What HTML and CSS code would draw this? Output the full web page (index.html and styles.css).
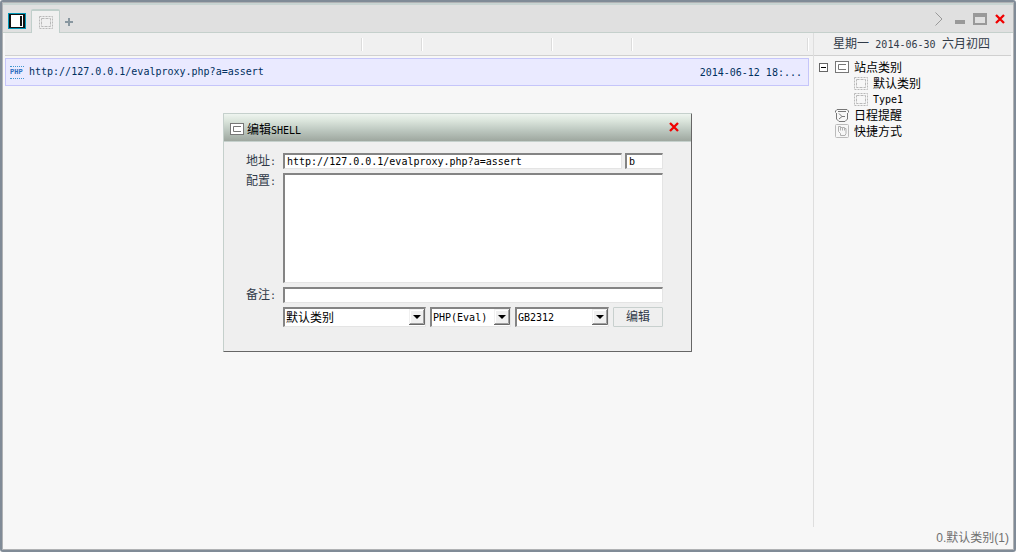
FILE: index.html
```
<!DOCTYPE html>
<html lang="zh-CN">
<head>
  <meta charset="UTF-8" />
  <meta name="viewport" content="width=device-width, initial-scale=1.0"/>
  <title>编辑SHELL</title>
  <link rel="stylesheet" href="styles.css">
</head>
<body>
  <!-- shared icons -->
  <svg class="defs" width="0" height="0" aria-hidden="true">
    <symbol id="i-box" viewBox="0 0 14 12">
      <rect x=".5" y=".5" width="13" height="11" fill="#fff" stroke="#777"/>
      <path d="M11 3.5H3.5v5H11" fill="none" stroke="#777"/>
    </symbol>
    <symbol id="i-dash" viewBox="0 0 14 13">
      <rect x=".5" y=".5" width="13" height="12" fill="none" stroke="#b9b9b9" stroke-dasharray="2 1"/>
      <rect x="2.5" y="2.5" width="9" height="8" fill="none" stroke="#b9b9b9" stroke-dasharray="3 1"/>
    </symbol>
    <symbol id="i-clock" viewBox="0 0 14 13">
      <path d="M.5 3.500V2L2 .5h10L13.500 2v1.500M3 2.500h8M1.500 4v6L4 12.500h6l2.500-2.500V4" fill="none" stroke="#777"/>
      <path d="M4 4.500l3 3-3 2.500M7 7.500h3" fill="none" stroke="#777"/>
    </symbol>
    <symbol id="i-hand" viewBox="0 0 14 14">
      <rect x=".5" y=".5" width="13" height="13" rx="1" fill="#f7f7f7" stroke="#bbb"/>
      <path d="M5.500 11.500v-2l-2-2v-5h2v4M5.500 3.500h2v3M7.500 3.500h2v3M9.500 4.500h1.500v5l-1 2H5.500" fill="none" stroke="#b0b0b0"/>
    </symbol>
    <symbol id="i-close" viewBox="0 0 10 10">
      <path d="M1 1l8 8M9 1L1 9" fill="none" stroke="#f00000" stroke-width="2.300"/>
    </symbol>
    <symbol id="i-drop" viewBox="0 0 16 16">
      <path d="M0 0h16v16H0z" fill="#f0f0f0"/>
      <path d="M1.500 15V1.500H15" fill="none" stroke="#fff"/>
      <path d="M15.500 0v15.500H0" fill="none" stroke="#696969"/>
      <path d="M14.500 1v13.500H1" fill="none" stroke="#a0a0a0"/>
      <path d="M4 6h8L8 10z" fill="#000"/>
    </symbol>
  </svg>

  <div class="window">
    <header class="titlebar">
      <svg class="app-icon" width="18" height="16" viewBox="0 0 18 16">
        <path d="M0 0h18v16H0z" fill="#0097b8"/>
        <path d="M1 1h16v14H1z" fill="#111"/>
        <path d="M3 2h12v12H3z" fill="#fff"/>
        <path d="M12 3h2v10h-2z" fill="#111"/>
      </svg>
      <button class="tab" aria-label="默认类别"><svg width="14" height="13"><use href="#i-dash"/></svg></button>
      <button class="icon-btn add" aria-label="新建"><svg width="8" height="8" viewBox="0 0 8 8"><path d="M4 0v8M0 4h8" stroke="#8997a0" stroke-width="2"/></svg></button>
      <div class="controls">
        <button class="icon-btn" aria-label="更多"><svg width="8" height="14" viewBox="0 0 8 14"><path d="M.5 .5L7 7 .5 13.500" fill="none" stroke="#999"/></svg></button>
        <button class="icon-btn min" aria-label="最小化"><svg width="10" height="12" viewBox="0 0 10 12"><path d="M0 7h10v4H0z" fill="#999"/></svg></button>
        <button class="icon-btn max" aria-label="最大化"><svg width="14" height="12" viewBox="0 0 14 12"><path d="M0 0h14v12H0zM2 4v6h10V4z" fill="#999" fill-rule="evenodd"/></svg></button>
        <button class="icon-btn" aria-label="关闭"><svg width="10" height="10"><use href="#i-close"/></svg></button>
      </div>
    </header>

    <div class="content">
      <main class="list">
        <table>
          <colgroup>
            <col><col class="c-ip"><col class="c-area"><col class="c-note"><col class="c-time"><col class="c-end">
          </colgroup>
          <thead>
            <tr><th><i></i></th><th><i></i></th><th><i></i></th><th><i></i></th><th><i></i></th><th></th></tr>
          </thead>
          <tbody>
            <tr>
              <td><div class="url"><span class="php">PHP</span><span class="en">http://127.0.0.1/evalproxy.php?a=assert</span></div></td>
              <td></td><td></td><td></td>
              <td class="time"><span class="en">2014-06-12 18:...</span></td>
            </tr>
          </tbody>
        </table>
      </main>

      <aside class="side">
        <div class="date">星期一 <span class="en">2014-06-30</span> 六月初四</div>
        <ul class="tree">
          <li>
            <button class="expander" aria-label="折叠"><svg width="9" height="9" viewBox="0 0 9 9"><rect x=".5" y=".5" width="8" height="8" fill="#fff" stroke="#666"/><path d="M2 4.500h5" stroke="#000"/></svg></button>
            <svg width="14" height="12"><use href="#i-box"/></svg><span>站点类别</span>
          </li>
          <li class="child"><svg width="14" height="13"><use href="#i-dash"/></svg><span>默认类别</span></li>
          <li class="child"><svg width="14" height="13"><use href="#i-dash"/></svg><span class="en">Type1</span></li>
          <li class="leaf"><svg width="14" height="13"><use href="#i-clock"/></svg><span>日程提醒</span></li>
          <li class="leaf"><svg width="14" height="14"><use href="#i-hand"/></svg><span>快捷方式</span></li>
        </ul>
      </aside>
    </div>

    <footer class="status">0.默认类别(1)</footer>
  </div>

  <div class="dialog" role="dialog" aria-labelledby="dialog-title">
    <div class="dialog-head">
      <svg width="14" height="12"><use href="#i-box"/></svg>
      <span class="dialog-title" id="dialog-title">编辑<span class="en">SHELL</span></span>
      <button class="icon-btn" aria-label="关闭"><svg width="10" height="10"><use href="#i-close"/></svg></button>
    </div>
    <form class="form">
      <label for="url">地址<span class="en">:</span></label>
      <div class="fields">
        <input class="field grow" type="text" id="url" value="http://127.0.0.1/evalproxy.php?a=assert">
        <input class="field pass" type="text" value="b" aria-label="密码">
      </div>
      <label for="config">配置<span class="en">:</span></label>
      <textarea class="field config" id="config"></textarea>
      <label for="note">备注<span class="en">:</span></label>
      <input class="field" type="text" id="note">
      <div class="fields actions">
        <span class="pick grow">
          <select class="field cn" aria-label="类别"><option>默认类别</option></select>
          <svg width="16" height="16"><use href="#i-drop"/></svg>
        </span>
        <span class="pick script">
          <select class="field" aria-label="脚本类型"><option>PHP(Eval)</option></select>
          <svg width="16" height="16"><use href="#i-drop"/></svg>
        </span>
        <span class="pick charset">
          <select class="field" aria-label="编码"><option>GB2312</option></select>
          <svg width="16" height="16"><use href="#i-drop"/></svg>
        </span>
        <button class="submit" type="button">编辑</button>
      </div>
    </form>
  </div>
</body>
</html>
```
FILE: styles.css
```
* {
  box-sizing: border-box;
}

body {
  margin: 0;
  font: 12px/16px "Liberation Sans", "Noto Sans CJK SC", sans-serif;
  color: #000;
  background: #f7f7f7;
}

svg {
  display: block;
  flex: none;
}

.defs {
  position: absolute;
}

button {
  padding: 0;
  border: none;
  background: none;
}

/* latin text is half the width of a chinese character */
.en {
  font-family: "DejaVu Sans Mono", "Liberation Mono", monospace;
  font-size: 10px;
  line-height: 12px;
}

.window {
  display: flex;
  flex-direction: column;
  height: 100vh;
  border: 2px solid #808b97;
  border-radius: 3px;
  box-shadow: inset 0 0 0 1px #b0b2b4;
  padding: 1px;
}

/* title bar */
.titlebar {
  display: flex;
  height: 30px;
  padding: 0 8px 0 5px;
  background: #e0e0e0;
  border-top: 2px solid #c8d4d2;
  border-bottom: 1px solid #c5d0cc;
}

.app-icon {
  margin-top: 8px;
}

.tab {
  display: flex;
  align-items: center;
  justify-content: center;
  width: 29px;
  height: 24px;
  margin: 4px 5px 0;
  background: #f0f0f0;
  border: 1px solid #c0cfcb;
  border-top-width: 2px;
  border-bottom: none;
  border-radius: 2px 2px 0 0;
}

.icon-btn {
  display: flex;
  align-items: center;
}

.add {
  margin-top: 6px;
  height: 22px;
}

.controls {
  display: flex;
  align-items: center;
  margin-left: auto;
  height: 28px;
}

.min {
  margin-left: 12px;
}

.max {
  margin: 0 8px 0 8px;
}

/* list */
.content {
  display: flex;
  flex: 1;
  min-height: 0;
  padding: 0 2px;
}

.list {
  flex: 1;
  min-width: 0;
}

table {
  width: 100%;
  table-layout: fixed;
  border-spacing: 0;
}

.c-ip {
  width: 60px;
}

.c-area {
  width: 130px;
}

.c-note {
  width: 80px;
}

.c-time {
  width: 176px;
}

.c-end {
  width: 4px;
}

th {
  height: 23px;
  padding: 0;
  background: #f0f0f0;
  border-bottom: 1px solid #d0d0d0;
}

th i {
  display: block;
  width: 2px;
  height: 13px;
  margin-left: auto;
  background: #fff;
  border-left: 1px solid #dcdcdc;
}

tbody::before {
  content: "";
  display: table-row;
  height: 2px;
}

td {
  height: 28px;
  padding: 0;
  color: #003060;
  background: #eaeaff;
  border: solid #c5c5fa;
  border-width: 1px 0;
}

td:first-child {
  border-left-width: 1px;
}

td:last-child {
  border-right-width: 1px;
}

.url {
  display: flex;
  align-items: center;
  gap: 5px;
  padding-left: 4px;
}

.php {
  width: 14px;
  font: bold 7px/11px "Liberation Mono", monospace;
  color: #2f6fc0;
  border: dotted #3f96d0;
  border-width: 1px 0;
}

.time {
  padding-right: 6px;
  text-align: right;
  white-space: nowrap;
}

/* sidebar */
.side {
  width: 198px;
  border-left: 1px solid #dedede;
}

.date {
  height: 23px;
  padding-left: 19px;
  line-height: 22px;
  white-space: nowrap;
  color: #303a48;
  background: #f0f0f0;
  border-bottom: 1px solid #d0d0d0;
}

.date .en {
  margin: 0 3px;
}

.tree {
  margin: 3px 0 0;
  padding: 0 0 0 5px;
  list-style: none;
}

.tree li {
  display: flex;
  align-items: center;
  gap: 5px;
  height: 16px;
}

.tree span {
  padding-top: 2px;
}

.tree .leaf {
  padding-left: 16px;
}

.tree .child {
  padding-left: 35px;
}

.expander {
  margin-right: 2px;
}

.status {
  height: 22px;
  padding-right: 4px;
  line-height: 22px;
  text-align: right;
  color: #707070;
}

/* edit dialog */
.dialog {
  position: absolute;
  top: 113px;
  left: 223px;
  width: 469px;
  background: #efefef;
  border: 1px solid #c5d0cc;
  border-right-color: #666;
  border-bottom-color: #666;
  border-radius: 1px;
}

.dialog-head {
  display: flex;
  align-items: center;
  gap: 3px;
  height: 28px;
  padding: 2px 12px 0 6px;
  background: linear-gradient(#eef4ef, #dbe5dc 25%, #bdc8c0 60%, #9ea79f);
  border-bottom: 1px solid #c5d0cc;
}

.dialog-title {
  padding-top: 2px;
}

.dialog-head .icon-btn {
  margin-left: auto;
  padding-bottom: 3px;
}

.form {
  display: grid;
  grid-template-columns: 31px 1fr;
  gap: 4px 6px;
  padding: 11px 28px 24px 22px;
}

label {
  height: 16px;
  color: #303a48;
  white-space: nowrap;
}

.fields {
  display: flex;
  gap: 3px;
}

.field {
  display: block;
  width: 100%;
  height: 16px;
  margin: 0;
  padding: 0 2px;
  font: 10px/12px "DejaVu Sans Mono", "Liberation Mono", monospace;
  color: #000;
  background: #fff;
  border: 2px solid;
  border-color: #848484 #e4e4e4 #e4e4e4 #848484;
  border-right-width: 1px;
  border-bottom-width: 1px;
  border-radius: 0;
  outline: none;
}

.grow {
  flex: 1;
}

.pass {
  width: 38px;
}

.config {
  height: 110px;
  resize: none;
}

.actions {
  grid-column: 2;
  gap: 4px;
}

.pick {
  position: relative;
}

.pick svg {
  position: absolute;
  top: 2px;
  right: 1px;
  pointer-events: none;
}

.pick .field {
  height: 20px;
  padding: 0 0 0 1px;
  appearance: none;
}

.pick .cn {
  font: 12px/16px "Liberation Sans", "Noto Sans CJK SC", sans-serif;
}

.script {
  width: 81px;
}

.charset {
  width: 94px;
}

.submit {
  width: 50px;
  height: 20px;
  font: inherit;
  color: #303a48;
  background: #efefef;
  border: 1px solid #c8d0ce;
  border-radius: 1px;
}
```
